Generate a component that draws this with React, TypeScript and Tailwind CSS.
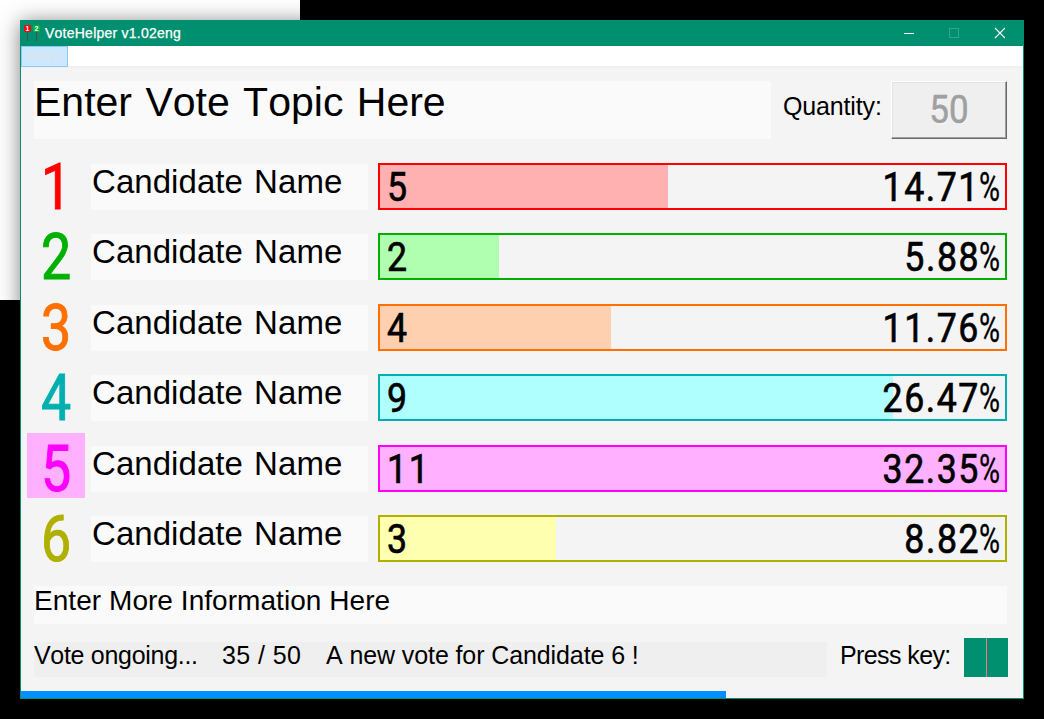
type Candidate = {
  id: number;
  votes: number;
  percent: string;
  fill: number;
  text: string;
  border: string;
  bar: string;
  active?: boolean;
};

const candidates: Candidate[] = [
  { id: 1, votes: 5, percent: "14.71", fill: 288, text: "text-[#ff0000]", border: "border-[#ff0000]", bar: "bg-[#ffb0b0]" },
  { id: 2, votes: 2, percent: "5.88", fill: 119, text: "text-[#00b000]", border: "border-[#00b000]", bar: "bg-[#b0ffb0]" },
  { id: 3, votes: 4, percent: "11.76", fill: 231, text: "text-[#ff7000]", border: "border-[#ff7000]", bar: "bg-[#ffd0b0]" },
  { id: 4, votes: 9, percent: "26.47", fill: 513, text: "text-[#00b0b0]", border: "border-[#00b0b0]", bar: "bg-[#b0ffff]" },
  { id: 5, votes: 11, percent: "32.35", fill: 625, text: "text-[#ff00ff]", border: "border-[#ff00ff]", bar: "bg-[#ffb0ff]", active: true },
  { id: 6, votes: 3, percent: "8.82", fill: 176, text: "text-[#b0b000]", border: "border-[#b0b000]", bar: "bg-[#ffffb0]" },
];

function AppIcon() {
  return (
    <svg width="18" height="18" viewBox="0 0 18 18" className="shrink-0">
      <path d="M4.5 8V17M13.5 8V17" stroke="#5a4a3c" strokeWidth="1" />
      <rect x="1" y="1" width="7" height="7" rx="1.5" fill="#ff0000" />
      <rect x="10" y="1" width="7" height="7" rx="1.5" fill="#00b040" />
      <text x="4.5" y="7" fontSize="7" fontWeight="bold" textAnchor="middle" fill="#fff">1</text>
      <text x="13.5" y="7" fontSize="7" fontWeight="bold" textAnchor="middle" fill="#fff">2</text>
    </svg>
  );
}

function TitleBar() {
  return (
    <div className="flex h-[25px] items-start bg-[#009070] pt-[3px] pl-[2px] text-white">
      <AppIcon />
      <span className="ml-1 flex-1 text-[14px] leading-[18px] tracking-[0.24px] [-webkit-text-stroke:0.25px_currentColor]">VoteHelper v1.02eng</span>
      <svg width="102" height="12" viewBox="0 0 102 12" fill="none" className="mt-[3px] mr-[18px]" shapeRendering="crispEdges">
        <path d="M1 6.5H11" stroke="#fff" />
        <rect x="46.5" y="1.5" width="9" height="9" stroke="#33a68d" />
        <path d="M92 1L102 11M102 1L92 11" stroke="#fff" strokeWidth="1.2" shapeRendering="auto" />
      </svg>
    </div>
  );
}

function CandidateRow({ c }: { c: Candidate }) {
  return (
    <div className="flex h-[65px] items-start">
      <div className={`flex h-[65px] w-[58px] shrink-0 justify-center ${c.text} ${c.active ? "bg-[#ffb0ff]" : ""}`}>
        <span className="origin-center scale-x-[0.84] font-[Roboto,sans-serif] text-[64px] leading-[73px] [-webkit-text-stroke:1px_currentColor]">{c.id}</span>
      </div>
      <div className="mt-[13px] ml-[6px] h-[46px] w-[277px] shrink-0 bg-[#fafafa] pl-px text-[33px] leading-[36px] tracking-[0.05px] whitespace-nowrap [word-spacing:2px]">
        Candidate Name
      </div>
      <div className={`mt-3 ml-[10px] grid h-[47px] w-[629px] shrink-0 border-2 ${c.border}`}>
        <div className={`col-start-1 row-start-1 ${c.bar}`} style={{ width: c.fill }} />
        <div className="col-start-1 row-start-1 flex h-[43px] justify-between pr-1 pl-[7px] font-[Roboto,sans-serif] text-[41px] leading-[45px]">
          <span className="origin-left scale-x-[0.87] tracking-[2px] [-webkit-text-stroke:0.7px_currentColor]">{c.votes}</span>
          <span className="flex">
            <span className="-mr-px origin-right scale-x-[0.87] tracking-[1.8px] [-webkit-text-stroke:0.7px_currentColor]">{c.percent}</span>
            <span className="w-[22px]">
              <span className="inline-block origin-left scale-x-[0.7] [-webkit-text-stroke:0.3px_currentColor]">%</span>
            </span>
          </span>
        </div>
      </div>
    </div>
  );
}

export default function App() {
  return (
    <div className="grid h-[719px] w-[1044px] overflow-hidden bg-black font-['Liberation_Sans',sans-serif] text-black [font-kerning:none]">
      <div className="col-start-1 row-start-1 size-[300px] overflow-hidden bg-white pt-5 pl-5">
        <div className="h-[679px] w-[1004px] shadow-[0_2px_20px_rgba(0,0,0,0.5)]" />
      </div>
      <div className="col-start-1 row-start-1 mt-5 ml-5 flex h-[679px] w-[1004px] flex-col border border-[#009070] bg-[#f4f4f4]">
        <TitleBar />
        <div className="h-[22px] shrink-0 border-b-2 border-[#f0f0f0] bg-white">
          <div className="h-[21px] w-[47px] border border-[#90c8f6] bg-[#cce8ff] pl-[6px] text-[13px] leading-[18px] text-[#dfe3e8]">Menu</div>
        </div>

        <div className="mt-[13px] flex h-[58px] shrink-0 pl-[13px]">
          <div className="w-[737px] bg-[#fafafa] text-[41px] leading-[43px] [word-spacing:2px]">Enter Vote Topic Here</div>
          <div className="ml-3 w-[108px] text-[25px] leading-[51px] tracking-[-0.15px]">Quantity:</div>
          <button className="h-[58px] w-[116px] border border-t-white border-r-[#696969] border-b-[#696969] border-l-white bg-[#efefef] font-[Roboto,sans-serif] text-[39px] leading-[56px] text-[#a0a0a0] shadow-[inset_-1px_-1px_0_#a0a0a0,inset_1px_1px_0_#e3e3e3] [-webkit-text-stroke:0.6px_currentColor] [text-shadow:1px_1px_0_#fff]">
            <span className="inline-block scale-x-90">50</span>
          </button>
        </div>

        <div className="mt-3 grid shrink-0 grid-rows-[70px_71px_70px_71px_70px_65px] pl-[6px]">
          {candidates.map((c) => (
            <CandidateRow key={c.id} c={c} />
          ))}
        </div>

        <div className="mt-[18px] ml-[13px] h-[38px] w-[973px] shrink-0 bg-[#fafafa] text-[28px] leading-[30px] tracking-[0.05px]">
          Enter More Information Here
        </div>

        <div className="mt-[14px] flex h-[39px] shrink-0 items-end pl-[13px] text-[25px]">
          <div className="flex h-[35px] w-[793px] bg-[#efefef] leading-[27px] whitespace-nowrap">
            <span className="w-[188px] tracking-[-0.3px]">Vote ongoing...</span>
            <span className="w-[104px] tracking-[0.4px]">35 / 50</span>
            <span className="tracking-[-0.1px]">A new vote for Candidate 6 !</span>
          </div>
          <div className="ml-[13px] h-[35px] w-[124px] leading-[27px] tracking-[-0.6px]">Press key:</div>
          <div className="flex h-[39px] w-[44px] bg-[#009070] pl-[22px]">
            <div className="w-px bg-[#ff7090]" />
          </div>
        </div>

        <div className="mt-[14px] h-[7px] w-[705px] shrink-0 bg-[#0090ff]" />
      </div>
    </div>
  );
}
